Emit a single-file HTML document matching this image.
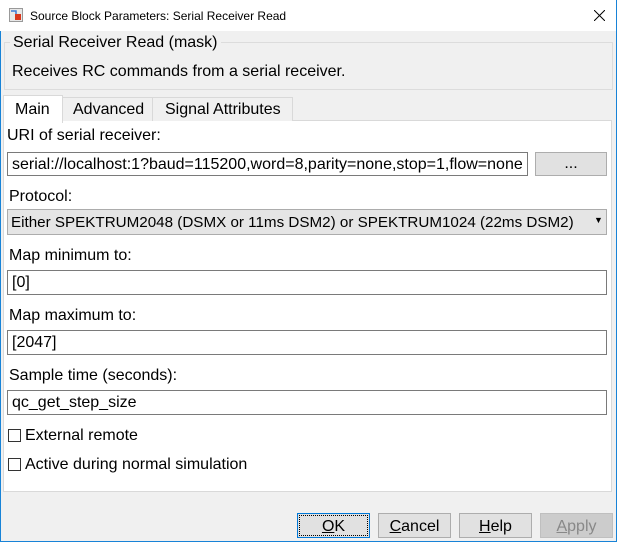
<!DOCTYPE html><html><head><style>
body{margin:0;width:617px;height:542px;overflow:hidden;font-family:"Liberation Sans",sans-serif;font-size:16px;color:#000}
.win{position:absolute;left:0;top:0;width:615px;height:541px;border:1px solid #1883d7;border-top:none;background:#f0f0f0}
.in{position:absolute;left:-1px;top:0}
.title{position:absolute;left:0;top:0;width:616px;height:31px;background:#fff;font-size:12px}
.a{position:absolute;white-space:nowrap}
.inp{position:absolute;background:#fff;border:1px solid #7a7a7a;box-sizing:border-box;padding:3px 0 0 4px;white-space:nowrap;overflow:hidden}
.btn{position:absolute;background:#e1e1e1;border:1px solid #adadad;box-sizing:border-box;text-align:center;padding-top:4px}
.cb{position:absolute;width:11px;height:11px;border:1px solid #333;background:#fff}
</style></head><body><div class="win"><div class="in">
<div class="title"><svg class="a" style="left:9px;top:8px" width="14" height="14"><rect x="0.5" y="0.5" width="13" height="13" fill="#e8e8e8" stroke="#999"/><rect x="6" y="6" width="6" height="6" fill="#d9381e"/><path d="M2 3h5v3" stroke="#3a7bd5" fill="none" stroke-width="1.5"/></svg>
<span class="a" style="left:30px;top:9px">Source Block Parameters: Serial Receiver Read</span>
<svg class="a" style="left:594px;top:10px" width="11" height="11"><path d="M0 0L11 11M11 0L0 11" stroke="#000" stroke-width="1"/></svg></div>
<div class="a" style="left:4px;top:42px;width:607px;height:46px;border:1px solid #dcdcdc"></div>
<span class="a" style="left:10px;top:34px;background:#f0f0f0;padding:0 3px">Serial Receiver Read (mask)</span>
<span class="a" style="left:12px;top:63px">Receives RC commands from a serial receiver.</span>
<div class="a" style="left:3px;top:120px;width:607px;height:370px;background:#fff;border:1px solid #d9d9d9"></div>
<div class="a" style="left:62px;top:97px;width:90px;height:23px;border:1px solid #d9d9d9;border-bottom:none;background:#f0f0f0"></div>
<div class="a" style="left:152px;top:97px;width:139px;height:23px;border:1px solid #d9d9d9;border-bottom:none;background:#f0f0f0"></div>
<div class="a" style="left:3px;top:95px;width:58px;height:27px;border:1px solid #d9d9d9;border-bottom:none;background:#fff"></div>
<span class="a" style="left:15px;top:101px">Main</span>
<span class="a" style="left:73px;top:101px">Advanced</span>
<span class="a" style="left:165px;top:101px">Signal Attributes</span>
<span class="a" style="left:7px;top:127px">URI of serial receiver:</span>
<div class="inp" style="left:7px;top:152px;width:521px;height:24px">serial://localhost:1?baud=115200,word=8,parity=none,stop=1,flow=none</div>
<div class="btn" style="left:535px;top:152px;width:72px;height:24px;padding-top:2px">...</div>
<span class="a" style="left:9px;top:188px">Protocol:</span>
<div class="a" style="left:7px;top:209px;width:600px;height:26px;background:#e5e5e5;border:1px solid #acacac;box-sizing:border-box;padding:4px 0 0 3px;overflow:hidden;font-size:15.2px">Either SPEKTRUM2048 (DSMX or 11ms DSM2) or SPEKTRUM1024 (22ms DSM2)<span class="a" style="left:586px;top:5px;font-size:9px">▼</span></div>
<span class="a" style="left:9px;top:247px">Map minimum to:</span>
<div class="inp" style="left:7px;top:270px;width:600px;height:25px">[0]</div>
<span class="a" style="left:9px;top:307px">Map maximum to:</span>
<div class="inp" style="left:7px;top:330px;width:600px;height:25px">[2047]</div>
<span class="a" style="left:9px;top:367px">Sample time (seconds):</span>
<div class="inp" style="left:7px;top:390px;width:600px;height:25px">qc_get_step_size</div>
<div class="cb" style="left:8px;top:429px"></div><span class="a" style="left:25px;top:427px">External remote</span>
<div class="cb" style="left:8px;top:458px"></div><span class="a" style="left:25px;top:456px">Active during normal simulation</span>
<div class="btn" style="left:297px;top:513px;width:73px;height:25px;border:1px solid #0078d7;outline:1px dotted #000;outline-offset:-3px"><u>O</u>K</div>
<div class="btn" style="left:378px;top:513px;width:73px;height:25px"><u>C</u>ancel</div>
<div class="btn" style="left:459px;top:513px;width:73px;height:25px"><u>H</u>elp</div>
<div class="btn" style="left:540px;top:513px;width:73px;height:25px;background:#ccc;border-color:#bfbfbf;color:#888"><u>A</u>pply</div>
</div></div></body></html>
